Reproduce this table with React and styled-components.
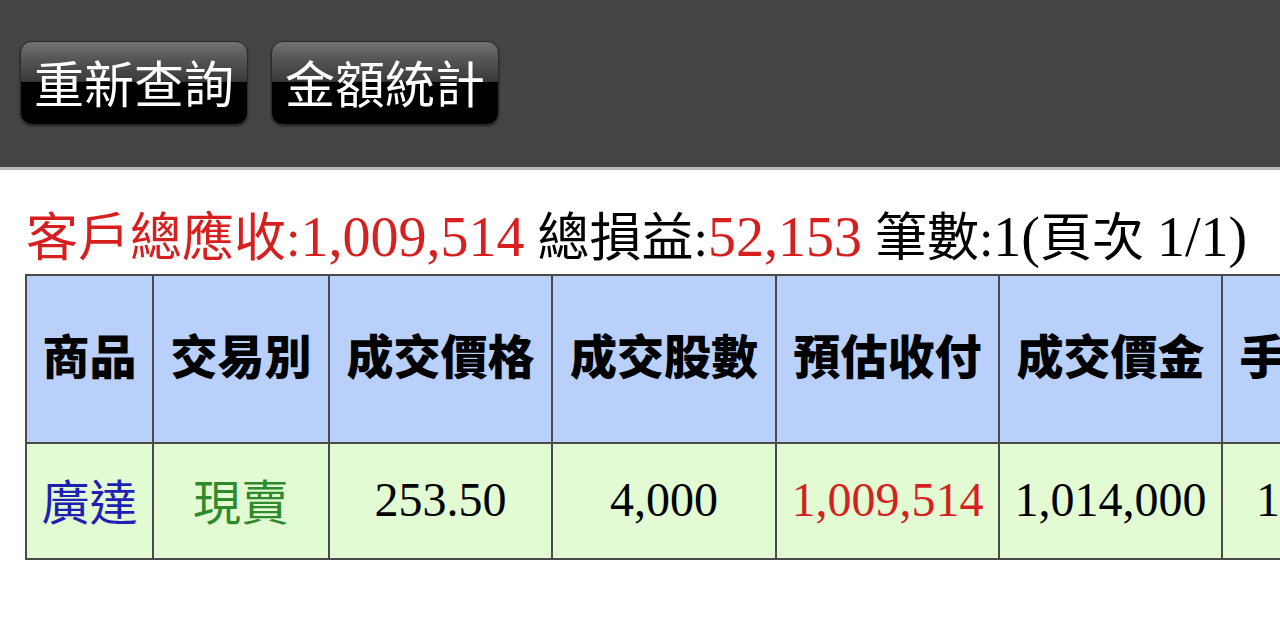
import styled, { createGlobalStyle } from 'styled-components'

const GlobalStyle = createGlobalStyle`
  html, body {
    margin: 0;
    padding: 0;
    background: #fff;
    overflow: hidden;
  }
`

const Page = styled.div`
  width: 1280px;
  height: 632px;
  overflow: hidden;
  font-family: "Liberation Serif", "Noto Sans CJK TC", serif;
`

const TopBar = styled.div`
  height: 170px;
  box-sizing: border-box;
  background: #444;
  border-bottom: 3px solid #b9b9b9;
  padding: 41px 20px 0;
  display: flex;
  gap: 23px;
  align-items: flex-start;
`

const GlossButton = styled.button`
  width: 228px;
  height: 84px;
  border: 1px solid #2a2a2a;
  border-radius: 12px;
  background: linear-gradient(#737373 0%, #565656 20%, #3a3a3a 48%, #000 49%, #000 100%);
  box-shadow: 0 1px 2px rgba(0, 0, 0, .6);
  color: #fff;
  font-family: "Noto Sans CJK TC", sans-serif;
  font-size: 50px;
  line-height: 1;
  padding: 0 0 4px;
  display: flex;
  align-items: center;
  justify-content: center;
`

const Summary = styled.div`
  margin: 32px 0 0 26px;
  font-size: 52px;
  line-height: 70px;
  white-space: nowrap;
  color: #000;
`

const Num = styled.span`
  font-size: 56px;
  color: ${p => p.$red ? '#d71f1f' : 'inherit'};
`

const Red = styled.span`
  color: #d71f1f;
`

const Table = styled.table`
  margin: 0 0 0 25px;
  border-collapse: collapse;
  table-layout: fixed;
  width: ${p => p.$width}px;
  border: 2px solid #4a4a4a;
`

const Th = styled.th`
  height: 168px;
  box-sizing: border-box;
  background: #b9d0fb;
  border: 2px solid #4a4a4a;
  font-family: "Noto Sans CJK TC", sans-serif;
  font-weight: 900;
  font-size: 47px;
  color: #000;
  text-align: center;
  white-space: nowrap;
  padding: 0 0 12px;
`

const Td = styled.td`
  height: 110px;
  background: #e2fbd3;
  border: 2px solid #4a4a4a;
  font-size: 48px;
  font-family: ${p => p.$cjk ? '"Noto Sans CJK TC", sans-serif' : '"Liberation Serif", serif'};
  color: ${p => p.$color || '#000'};
  text-align: center;
  white-space: nowrap;
  padding: 0 0 4px;
`

const columns = [
  { title: '商品', width: 127, value: '廣達', color: '#1f1fb4', cjk: true },
  { title: '交易別', width: 176, value: '現賣', color: '#2e8a2a', cjk: true },
  { title: '成交價格', width: 223, value: '253.50' },
  { title: '成交股數', width: 224, value: '4,000' },
  { title: '預估收付', width: 223, value: '1,009,514', color: '#d71f1f' },
  { title: '成交價金', width: 223, value: '1,014,000' },
  { title: '手續費', width: 176, value: '1,444' },
  { title: '交易稅', width: 176, value: '3,042' },
]

const tableWidth = columns.reduce((sum, c) => sum + c.width, 0)

export default function App() {
  return (
    <Page>
      <GlobalStyle />
      <TopBar>
        <GlossButton>重新查詢</GlossButton>
        <GlossButton>金額統計</GlossButton>
      </TopBar>
      <Summary>
        <Red>客戶總應收:</Red><Num $red>1,009,514</Num> 總損益:<Num $red>52,153</Num> 筆數:<Num>1(</Num>頁次 <Num>1/1)</Num>
      </Summary>
      <Table $width={tableWidth}>
        <colgroup>
          {columns.map(c => <col key={c.title} style={{ width: c.width }} />)}
        </colgroup>
        <thead>
          <tr>
            {columns.map(c => <Th key={c.title}>{c.title}</Th>)}
          </tr>
        </thead>
        <tbody>
          <tr>
            {columns.map(c => (
              <Td key={c.title} $color={c.color} $cjk={c.cjk}>{c.value}</Td>
            ))}
          </tr>
        </tbody>
      </Table>
    </Page>
  )
}
